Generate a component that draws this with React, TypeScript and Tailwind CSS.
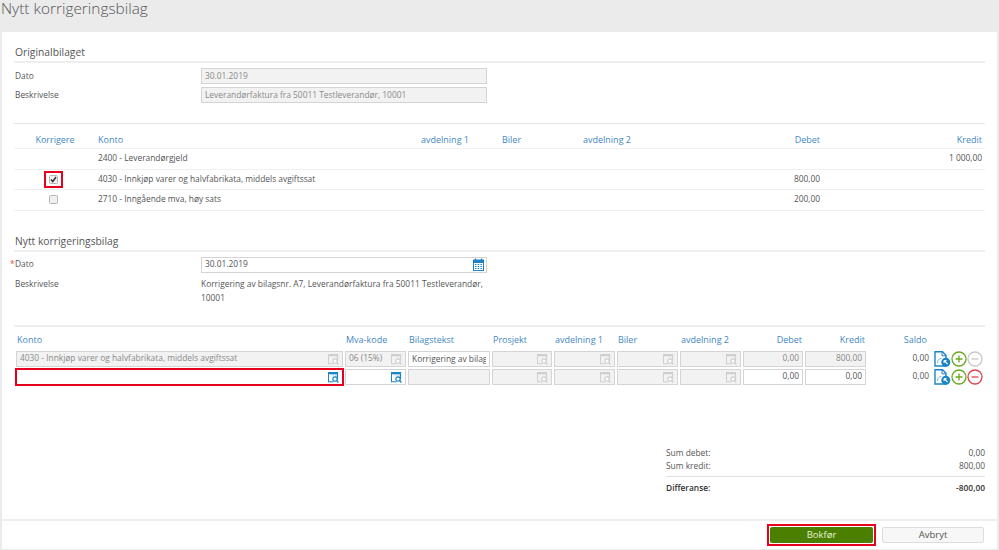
import React from 'react';

const lookupCols = 'grid grid-cols-[327px_61px_82px_60px_61px_61px_61px_60px_61px_61px_auto] gap-x-[2px]';

const LookupIcon = ({ active }: { active?: boolean }) => {
  const color = active ? '#1c84c6' : '#cfcfcf';
  return (
    <svg width="12" height="12" viewBox="0 0 12 12" className="shrink-0">
      <path d="M1 1.500h9.500v7" fill={active ? '#d8ecf8' : 'none'} stroke={color} strokeWidth="1.200" />
      <path d="M1 1h9.500v2.200H2v7h4.500v1H1z" fill={color} />
      <circle cx="8" cy="8" r="2.200" fill="white" stroke={color} strokeWidth="1.200" />
      <path d="M9.600 9.600l1.800 1.800" stroke={color} strokeWidth="1.400" />
    </svg>
  );
};

const CalendarIcon = () => (
  <svg width="11" height="13" viewBox="0 0 11 13" className="shrink-0">
    <rect x="0.5" y="2" width="10" height="10.5" fill="white" stroke="#1c84c6" />
    <rect x="0.5" y="2" width="10" height="3" fill="#1c84c6" />
    <path d="M2.500 0.500v2.500M8.500 0.500v2.500" stroke="#1c84c6" strokeWidth="1.200" />
    <path d="M2 6.500h1.500M4.700 6.500h1.500M7.400 6.500h1.500M2 8.500h1.500M4.700 8.500h1.500M7.400 8.500h1.500M2 10.500h1.500M4.700 10.500h1.500M7.400 10.500h1.500" stroke="#1c84c6" strokeWidth="1.200" />
  </svg>
);

const DocLinkIcon = () => (
  <svg width="17" height="16" viewBox="0 0 17 16" className="shrink-0">
    <path d="M1 0.800h7.500l3.500 3.500V15H1z" fill="white" stroke="#1c84c6" strokeWidth="1.400" />
    <path d="M8 0.800v4h4" fill="none" stroke="#1c84c6" />
    <path d="M3.500 12c0-3 1.500-4.500 4-4.500" fill="none" stroke="#7db8de" />
    <circle cx="11.800" cy="11.300" r="4.500" fill="#1c84c6" />
    <path d="M10.100 9.600l3.500 3.500M10.100 9.600h2.500M10.100 9.600v2.500" stroke="white" strokeWidth="1.100" fill="none" />
  </svg>
);

const RoundIcon = ({ color, plus }: { color: string; plus?: boolean }) => (
  <svg width="16" height="16" viewBox="0 0 16 16" className="shrink-0">
    <circle cx="8" cy="8" r="7" fill="white" stroke={color} strokeWidth="1.300" />
    <path d={plus ? 'M4.500 8h7M8 4.500v7' : 'M4.500 8h7'} stroke={color} strokeWidth="1.300" />
  </svg>
);

const SectionTitle = ({ children }: { children: React.ReactNode }) => (
  <div className="border-b-2 border-[#eeeeee] text-[10.300px] leading-[14px] text-[#555555] pb-[2px] pl-[1px]">{children}</div>
);

const ReadOnly = ({ children, right }: { children?: React.ReactNode; right?: boolean }) => (
  <div className={`h-[16px] border border-[#d4d4d4] bg-[#f2f2f2] px-[3px] flex items-center text-[#8a8a8a] overflow-hidden whitespace-nowrap ${right ? 'justify-end' : ''}`}>
    {children}
  </div>
);

const Lookup = ({ text, active }: { text?: string; active?: boolean }) => (
  <div className={`h-[16px] border border-[#d4d4d4] px-[3px] flex items-center justify-between overflow-hidden whitespace-nowrap ${active ? 'bg-white' : 'bg-[#f2f2f2] text-[#8a8a8a]'}`}>
    <span>{text}</span>
    <LookupIcon active={active} />
  </div>
);

const Amount = ({ value }: { value: string }) => (
  <div className="h-[16px] border border-[#d4d4d4] bg-white px-[3px] flex items-center justify-end overflow-hidden">{value}</div>
);

const origRows = [
  { check: null, konto: '2400 - Leverandørgjeld', debet: '', kredit: '1 000,00' },
  { check: true, konto: '4030 - Innkjøp varer og halvfabrikata, middels avgiftssat', debet: '800,00', kredit: '' },
  { check: false, konto: '2710 - Inngående mva, høy sats', debet: '200,00', kredit: '' },
];

const origCols = 'grid grid-cols-[84px_323px_81px_81px_161px_76px_162px] items-center';

export default function App() {
  return (
    <div className="w-[999px] h-[550px] overflow-hidden flex flex-col bg-[#ebebeb] text-[8.400px] text-[#555555] font-['Open_Sans',sans-serif]">
      <div className="h-[32px] shrink-0 pl-[1px] text-[15.400px] font-light leading-[18px] text-[#555555]">Nytt korrigeringsbilag</div>

      <div className="flex-1 mx-[2px] mb-[1px] bg-white flex flex-col min-h-0">
        <div className="flex-1 pl-[12px] pr-[12px] pt-[13px]">
          <SectionTitle>Originalbilaget</SectionTitle>

          <div className="mt-[5px] flex flex-col gap-[3px]">
            <div className="grid grid-cols-[187px_286px] items-center">
              <span className="pl-[1px]">Dato</span>
              <ReadOnly>30.01.2019</ReadOnly>
            </div>
            <div className="grid grid-cols-[187px_286px] items-center">
              <span className="pl-[1px]">Beskrivelse</span>
              <ReadOnly>Leverandørfaktura fra 50011 Testleverandør, 10001</ReadOnly>
            </div>
          </div>

          <div className="mt-[20px] border-t border-[#e6e6e6]">
            <div className={`${origCols} h-[25px] pt-[7px] border-b border-[#f0f0f0] text-[9px] text-[#3f88c5]`}>
              <span className="text-center pl-[2px] pr-[4px] whitespace-nowrap">Korrigere</span>
              <span>Konto</span>
              <span>avdelning 1</span>
              <span>Biler</span>
              <span>avdelning 2</span>
              <span className="text-right">Debet</span>
              <span className="text-right">Kredit</span>
            </div>
            {origRows.map((row) => (
              <div key={row.konto} className={`${origCols} h-[20.500px] border-b border-[#f0f0f0]`}>
                <span className="flex justify-center pr-[5px]">
                  {row.check !== null && (
                    <span className={`flex px-[2px] py-[1px] ${row.check ? 'outline-2 outline-offset-[1px] outline-[#e8001f]' : ''}`}>
                      <span className="w-[9px] h-[9px] rounded-[1.500px] border border-[#b5b5b5] bg-[#f0f0f0] flex items-center justify-center">
                        {row.check && (
                          <svg width="7" height="7" viewBox="0 0 7 7">
                            <path d="M1 3.500l1.800 2L6 1" fill="none" stroke="#333333" strokeWidth="1.500" />
                          </svg>
                        )}
                      </span>
                    </span>
                  )}
                </span>
                <span className="whitespace-nowrap">{row.konto}</span>
                <span />
                <span />
                <span />
                <span className="text-right">{row.debet}</span>
                <span className="text-right">{row.kredit}</span>
              </div>
            ))}
          </div>

          <div className="mt-[23px]">
            <SectionTitle>Nytt korrigeringsbilag</SectionTitle>
          </div>

          <div className="mt-[5px] grid grid-cols-[187px_286px] items-center relative">
            <span className="pl-[1px]">
              <span className="absolute left-[-4px] text-[#d9534f]">*</span>Dato
            </span>
            <div className="h-[16px] border border-[#d4d4d4] bg-white pl-[3px] pr-[2px] flex items-center justify-between">
              <span>30.01.2019</span>
              <CalendarIcon />
            </div>
          </div>
          <div className="mt-[3px] grid grid-cols-[187px_286px]">
            <span className="pl-[1px] pt-[2px]">Beskrivelse</span>
            <span className="leading-[14px] pt-[1px]">Korrigering av bilagsnr. A7, Leverandørfaktura fra 50011 Testleverandør, 10001</span>
          </div>

          <div className="mt-[20px] border-t-2 border-[#eeeeee] pl-[2px]">
            <div className={`${lookupCols} h-[24px] pt-[2px] items-center text-[9px] text-[#3f88c5]`}>
              <span className="pl-[1px]">Konto</span>
              <span className="pl-[1px]">Mva-kode</span>
              <span className="pl-[1px]">Bilagstekst</span>
              <span className="pl-[1px]">Prosjekt</span>
              <span className="pl-[1px]">avdelning 1</span>
              <span className="pl-[1px]">Biler</span>
              <span className="pl-[1px]">avdelning 2</span>
              <span className="text-right pr-[1px]">Debet</span>
              <span className="text-right pr-[1px]">Kredit</span>
              <span className="text-right pr-[2px]">Saldo</span>
              <span />
            </div>
            <div className={`${lookupCols} h-[16px] items-center`}>
              <Lookup text="4030 - Innkjøp varer og halvfabrikata, middels avgiftssat" />
              <Lookup text="06 (15%)" />
              <input
                readOnly
                value="Korrigering av bilagsnr. A7"
                className="h-[16px] w-full border border-[#d4d4d4] bg-white px-[3px] outline-none"
              />
              <Lookup />
              <Lookup />
              <Lookup />
              <Lookup />
              <ReadOnly right>0,00</ReadOnly>
              <ReadOnly right>800,00</ReadOnly>
              <span className="text-right">0,00</span>
              <div className="flex items-center pl-[3px]">
                <DocLinkIcon />
                <RoundIcon color="#6aa81e" plus />
                <RoundIcon color="#c8c8c8" />
              </div>
            </div>
            <div className={`${lookupCols} h-[16px] items-center mt-[2px]`}>
              <div className="outline-2 outline-[#e8001f] outline-offset-[-1px]">
                <Lookup active />
              </div>
              <Lookup active />
              <ReadOnly />
              <Lookup />
              <Lookup />
              <Lookup />
              <Lookup />
              <Amount value="0,00" />
              <Amount value="0,00" />
              <span className="text-right">0,00</span>
              <div className="flex items-center pl-[3px]">
                <DocLinkIcon />
                <RoundIcon color="#6aa81e" plus />
                <RoundIcon color="#e0444e" />
              </div>
            </div>
          </div>

          <div className="mt-[62px] ml-[652px] w-[319px]">
            <div className="flex justify-between h-[13px] items-center">
              <span>Sum debet:</span>
              <span>0,00</span>
            </div>
            <div className="flex justify-between h-[13px] items-center">
              <span>Sum kredit:</span>
              <span>800,00</span>
            </div>
            <div className="mt-[3px] border-t border-[#e0e0e0] pt-[4px] flex justify-between font-semibold text-[#333333] leading-[13px]">
              <span>Differanse:</span>
              <span>-800,00</span>
            </div>
          </div>
        </div>

        <div className="h-[30px] shrink-0 border-t-2 border-[#eeeeee] flex items-start justify-end gap-[9px] pt-[6px] pr-[13px]">
          <div className="flex outline-2 outline-offset-[1px] outline-[#e8001f]">
            <button className="w-[103px] h-[16px] rounded-[2px] bg-[#4a7f00] text-[#e6f2d8] text-[9.500px]">Bokfør</button>
          </div>
          <button className="w-[102px] h-[16px] rounded-[2px] border border-[#dddddd] bg-[#f7f7f7] text-[#555555] text-[9.500px]">Avbryt</button>
        </div>
      </div>
    </div>
  );
}
